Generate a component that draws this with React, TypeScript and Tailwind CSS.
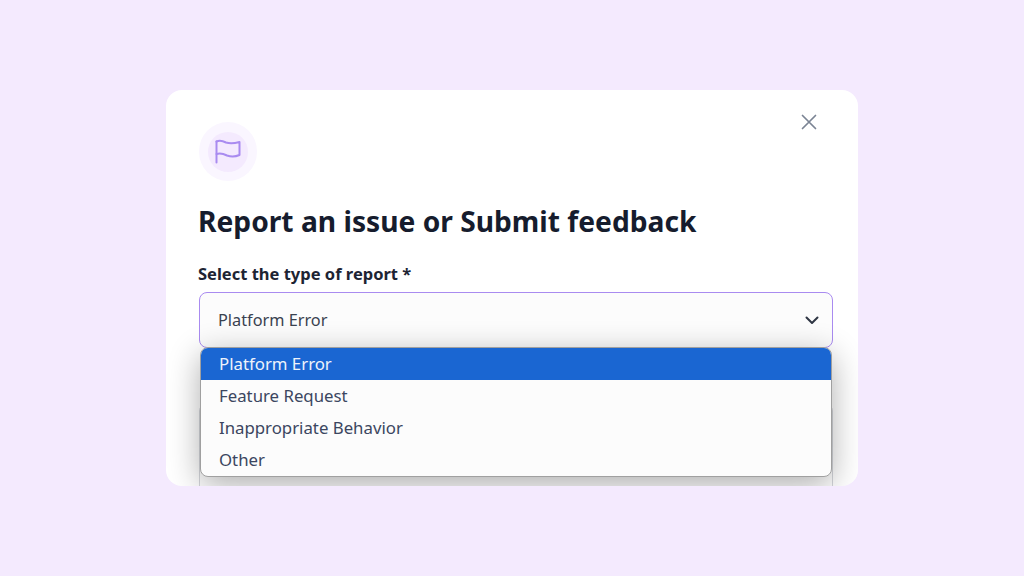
import React from 'react';

const options = ['Platform Error', 'Feature Request', 'Inappropriate Behavior', 'Other'];

const FlagIcon = () => (
  <svg width="28" height="28" viewBox="0 0 28 28" fill="none" stroke="#a98bf0" strokeWidth="2" strokeLinecap="round" strokeLinejoin="round">
    <path d="M2.5 24.5V3.5" />
    <path d="M2.5 3.5C6 2 9 3 12 4.5C15 5.5 20 5.5 25.5 4V17C21 19 17 19 13 17.5C9 15.5 6 15 2.5 16" />
  </svg>
);

const App: React.FC = () => {
  return (
    <div className="w-[1024px] h-[576px] bg-[#f4eafe] flex items-center justify-center font-['Noto_Sans',sans-serif]">
      <div className="relative w-[692px] h-[396px] bg-white rounded-2xl overflow-hidden px-[33px] pt-8">
        <button className="absolute top-[22px] right-[39px] text-[#7b8494]">
          <svg width="20" height="20" viewBox="0 0 20 20" fill="none" stroke="currentColor" strokeWidth="1.7" strokeLinecap="round">
            <path d="M3.5 3.5L16.5 16.5M16.5 3.5L3.5 16.5" />
          </svg>
        </button>

        <div className="w-[58px] h-[59px] rounded-full bg-[#faf6ff] flex items-center justify-center">
          <div className="w-10 h-10 rounded-full bg-[#f4eafe] flex items-center justify-center">
            <FlagIcon />
          </div>
        </div>

        <h1 className="mt-[22px] -ml-px text-[28.2px] leading-9 font-bold text-[#161c2d]">Report an issue or Submit feedback</h1>

        <label className="block mt-[23px] -ml-px text-[16.5px] leading-6 font-bold text-[#1d2433]">Select the type of report *</label>

        <div className="relative mt-[6px] w-[634px]">
          <div className="h-14 rounded-lg border border-[#a98bf0] bg-[#fcfcfc] pl-[18px] pr-[9px] flex items-center justify-between text-[16.3px] text-[#3a4250]">
            <span>Platform Error</span>
            <svg width="22" height="22" viewBox="0 0 22 22" fill="none" stroke="#2f3644" strokeWidth="2" strokeLinecap="round" strokeLinejoin="round">
              <path d="M5.5 8.5L11 14L16.5 8.5" />
            </svg>
          </div>

          <ul className="absolute z-10 left-[1px] top-[55px] w-[632px] h-[130px] bg-[#fcfcfc] border border-[#a0a0a0] rounded-lg overflow-hidden shadow-[0_8px_32px_rgba(0,0,0,0.32)] text-[16.8px] leading-8 text-[#3b4660]">
            {options.map((o, i) => (
              <li key={o} className={i === 0 ? 'h-8 pl-[18px] bg-[#1a66d2] text-[#eef3fb]' : 'h-8 pl-[18px]'}>
                {o}
              </li>
            ))}
          </ul>
        </div>

        <div className="mt-[55px] w-[634px] h-40 rounded-lg border border-[#d5d7dc]" />
      </div>
    </div>
  );
};

export default App;
